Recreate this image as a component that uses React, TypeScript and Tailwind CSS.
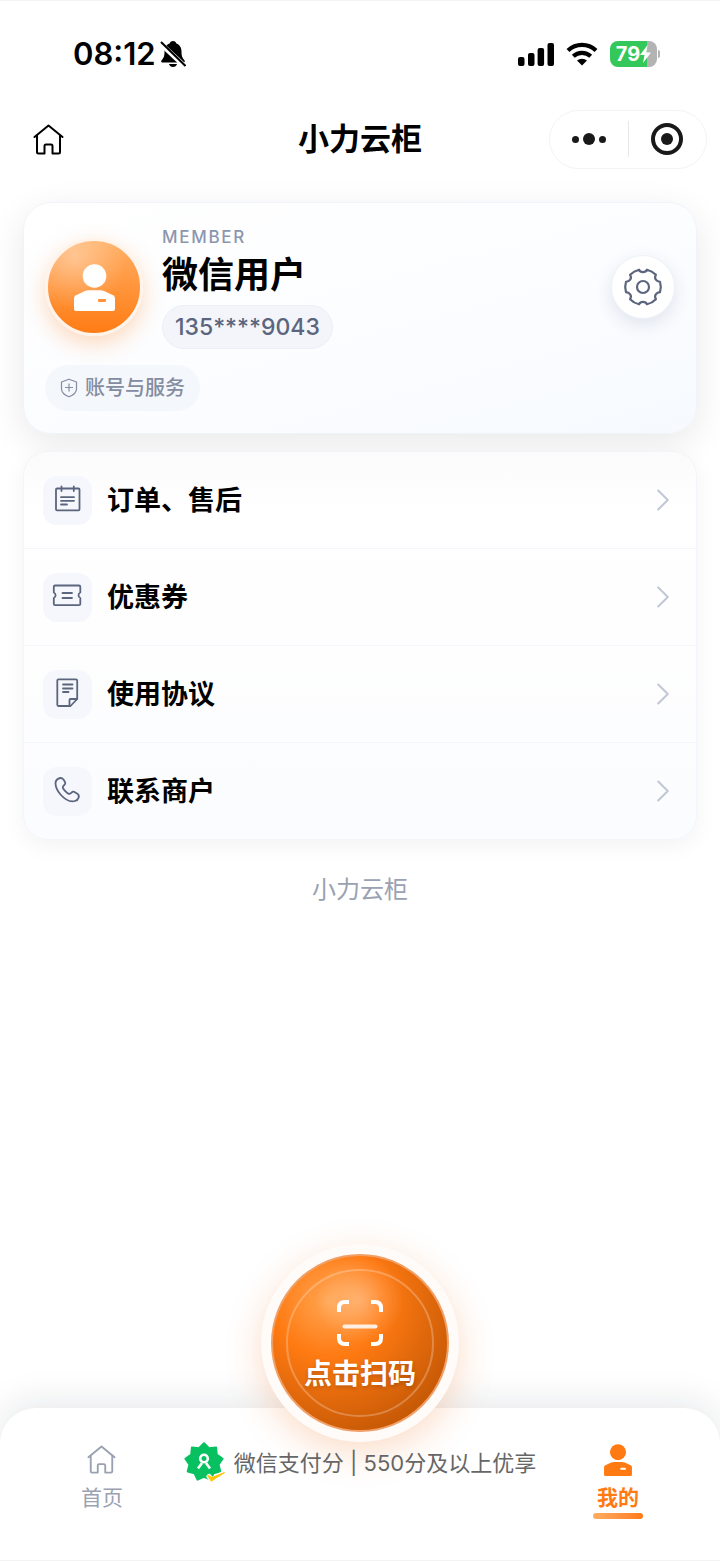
import React from 'react';

const HomeIcon: React.FC<{ className?: string }> = ({ className }) => (
  <svg viewBox="0 0 31 31" fill="none" stroke="currentColor" strokeWidth="2" strokeLinejoin="round" strokeLinecap="round" className={className}>
    <path d="M1.5 13 15.5 1.5 29.5 13" />
    <path d="M4 11.5V28q0 1.5 1.5 1.5h6V22q0-1.5 1.5-1.5h5q1.5 0 1.5 1.5v7.5h6q1.5 0 1.5-1.5V11.5" />
  </svg>
);

const UserIcon: React.FC<{ className?: string; slot: string }> = ({ className, slot }) => (
  <svg viewBox="0 0 41 47" fill="currentColor" className={className}>
    <circle cx="20.5" cy="12" r="11.8" />
    <path d="M2 31.2 10.5 27.2Q12.500 26.300 15 26.300H26Q28.500 26.300 30.500 27.200L39 31.200Q41 32.200 41 34V45Q41 47 39 47H2Q0 47 0 45V34Q0 32.200 2 31.200Z" />
    <rect x="24" y="35" width="8" height="3" rx="1" className={slot} />
  </svg>
);

const BellOffIcon = () => (
  <svg viewBox="0 0 26 28" className="h-7 w-[26px]">
    <path d="M13 1c1.800 0 3 1 3.400 2.400C20 4.800 21.500 8 21.500 11.500c0 5 1 6.500 3 9 .8 1.200 0 2-1 2H2.500c-1.200 0-1.800-1-1-2 2-2.500 3-4 3-9C4.500 8 6 4.800 9.600 3.400 10 2 11.200 1 13 1Z" />
    <path d="M9 24h8c-.5 2-2 3-4 3s-3.500-1-4-3Z" />
    <path d="M-.5 2.500 25 26.500" stroke="#fff" strokeWidth="5" />
    <path d="M1 2 25.500 26" stroke="#000" strokeWidth="2" />
  </svg>
);

const SignalIcon = () => (
  <svg viewBox="0 0 36 23" className="h-[23px] w-9">
    <rect x="0" y="14" width="6.500" height="9" rx="2" />
    <rect x="10" y="10" width="6.500" height="13" rx="2" />
    <rect x="19.600" y="5" width="6.500" height="18" rx="2" />
    <rect x="29.500" y="0" width="6.500" height="23" rx="2" />
  </svg>
);

const WifiIcon = () => (
  <svg viewBox="0 0 32 24" className="h-6 w-8" fill="none" stroke="#000" strokeWidth="4.200">
    <path d="M2 8.500a20.500 20.500 0 0 1 28 0" />
    <path d="M7.300 14.300a13 13 0 0 1 17.400 0" />
    <path d="M16 23.500 11 18.600a7.500 7.500 0 0 1 10 0Z" fill="#000" stroke="none" />
  </svg>
);

const GearIcon = () => (
  <svg viewBox="-20 -20 40 40" className="size-10" fill="none" stroke="currentColor" strokeWidth="2.200" strokeLinejoin="round">
    <path d="M-4-17.300Q-3-14.800 0-14.800T4-17.300Q9-16.200 12.900-12.200Q11.300-9.400 12.800-7.400T17-5.200Q18.600 0 17 5.200Q14.300 5.400 12.800 7.400T12.900 12.200Q9 16.200 4 17.300Q3 14.800 0 14.800T-4 17.300Q-9 16.200-12.900 12.200Q-11.300 9.400-12.800 7.400T-17 5.200Q-18.600 0-17-5.200Q-14.300-5.400-12.800-7.400T-12.900-12.200Q-9-16.200-4-17.300Z" />
    <circle r="6" />
  </svg>
);

const ShieldIcon = () => (
  <svg viewBox="0 0 18 20" className="h-5 w-[18px]" fill="none" stroke="currentColor" strokeWidth="1.200" strokeLinejoin="round">
    <path d="M9 1.200 16.500 4v7c0 3.500-3 6-7.500 7.800C4.500 17 1.500 14.500 1.500 11V4Z" />
    <path d="M9 5.500v8M5 9.500h8" />
  </svg>
);

const PayScoreIcon = () => (
  <svg viewBox="-20 -20 42 42" className="size-[42px]" strokeLinejoin="round" strokeLinecap="round">
    <path
      d="M0-18.800 5-13.800 12.100-14.400 12.800-7.400 18.600-3.300 14.500 2.600 16.300 9.500 9.500 11.300 6.500 17.700 0 14.800-6.500 17.700-9.500 11.300-16.300 9.500-14.500 2.600-18.600-3.300-12.800-7.400-12.100-14.400-5-13.800Z"
      fill="#07c160"
      stroke="#07c160"
      strokeWidth="2"
    />
    <g fill="none" stroke="#fff" strokeWidth="2.600">
      <circle cx="0" cy="-3.500" r="3.800" />
      <path d="M-2 1-6 6.500M2 1 6 6.500" strokeLinecap="butt" />
    </g>
    <path d="M5 14.500 8 18 19 11.500" fill="none" stroke="#fff" strokeWidth="5" />
    <path d="M4 13.500 8 15.500 20.500 10.500 7.500 19Z" fill="#ffc300" stroke="#ffc300" strokeWidth="1" />
  </svg>
);

const ScanIcon = () => (
  <svg viewBox="0 0 48 48" className="size-12" fill="none" stroke="#fff" strokeWidth="4">
    <path d="M3 13V9q0-6 6-6h4M35 3h4q6 0 6 6v4M45 35v4q0 6-6 6h-4M13 45H9q-6 0-6-6v-4" />
    <path d="M8.500 27.500h31" strokeLinecap="round" strokeOpacity=".85" />
  </svg>
);

const MENU_ITEMS = [
  {
    label: '订单、售后',
    icon: (
      <>
        <rect x="4" y="4.500" width="23.500" height="21.800" rx="1" />
        <path d="M9.500 2.500V7M21.800 2.500V7M9 13.200h13M9 16.800h13M9 20.500h6" />
      </>
    ),
  },
  {
    label: '优惠券',
    icon: (
      <>
        <path d="M3 4.500H27Q28.300 4.500 28.300 6v5.500a3 3 0 0 0 0 5.500V23Q28.300 24.200 27 24.200H3Q1.800 24.200 1.800 23V17a3 3 0 0 0 0-5.500V6Q1.800 4.500 3 4.500Z" />
        <path d="M10.500 12H20M10.500 17H20" />
      </>
    ),
  },
  {
    label: '使用协议',
    icon: (
      <>
        <path d="M6.500 1.300H24Q25.200 1.300 25.200 2.500V21L18.500 28H6.500Q5.300 28 5.300 26.800V2.500Q5.300 1.300 6.500 1.300Z" />
        <path d="M25 21H18.500Q17.500 21 17.500 22v6M11 6.500h9.500M11 10.500h9.500M11 14h5.500" />
      </>
    ),
  },
  {
    label: '联系商户',
    icon: (
      <path d="M3.500 8.200C3.500 4.500 8.500 1 11.500 4.500C12.500 6 13 7 13.300 8C13.700 10 10.500 10.500 10.800 12.500C11 14 14.500 18 16.800 18.800C19 19.500 19.500 16 22 16.800L25 18.500C28.500 20.500 26.500 25 23 26C18 27.500 12.500 24 8.500 19.500C5.500 16 3.500 12 3.500 8.200Z" />
    ),
  },
];

const StatusBar = () => (
  <div className="flex h-[106px] items-center justify-between pl-[73px] pr-[60px]">
    <div className="flex items-center gap-1">
      <span className="text-[31px] font-semibold leading-10">08:12</span>
      <BellOffIcon />
    </div>
    <div className="flex items-center">
      <SignalIcon />
      <div className="ml-3">
        <WifiIcon />
      </div>
      <div className="ml-3 flex h-[26px] w-[47px] items-center justify-center rounded-lg bg-[linear-gradient(90deg,#34c759_79%,#b3b3b3_79%)] text-[20px] font-bold text-white">
        79
        <svg viewBox="0 0 11 18" className="h-[18px] w-[11px]" fill="#fff">
          <path d="M7.500 0 0 10h4.500L3 18l8-10.500H6.500Z" />
        </svg>
      </div>
      <div className="ml-px h-2 w-0.5 rounded-r bg-[#b3b3b3]" />
    </div>
  </div>
);

const NavBar = () => (
  <header className="grid h-16 grid-cols-[1fr_auto_1fr] items-center pl-[33px] pr-[13px]">
    <button aria-label="首页" className="w-[31px]">
      <HomeIcon className="size-[31px]" />
    </button>
    <h1 className="pl-5 -ml-10 text-[31px] font-bold leading-10">小力云柜</h1>
    <div className="flex h-[59px] w-[158px] items-center justify-self-end rounded-full border border-[#f3f3f3] text-[#191919]">
      <button aria-label="更多" className="flex flex-1 items-center justify-center gap-1">
        <span className="size-[7px] rounded-full bg-current" />
        <span className="size-3 rounded-full bg-current" />
        <span className="size-[7px] rounded-full bg-current" />
      </button>
      <div className="h-9 w-px bg-[#e8e8e8]" />
      <button aria-label="关闭" className="flex flex-1 justify-center">
        <span className="flex size-8 items-center justify-center rounded-full border-4 border-current">
          <span className="size-3 rounded-full bg-current" />
        </span>
      </button>
    </div>
  </header>
);

const ProfileCard = () => (
  <section className="rounded-[28px] border border-[#f0f4fa] bg-[linear-gradient(165deg,#ffffff_0%,#fcfdff_50%,#f6faff_100%)] px-[21px] pt-[22px] pb-[22px] shadow-[0_10px_36px_rgba(0,0,0,0.09)]">
    <div className="flex items-center">
      <div className="flex size-[98px] items-center justify-center rounded-full border-3 border-[#fff3ea] bg-[radial-gradient(circle_at_30%_20%,rgba(255,255,255,0.35),transparent_50%),linear-gradient(180deg,#ffb066_0%,#ff7a12_100%)] bg-origin-border shadow-[0_8px_22px_rgba(255,122,18,0.28)]">
        <UserIcon className="h-[47px] w-[41px] text-white" slot="fill-[#ff933c]" />
      </div>
      <div className="ml-[19px] flex flex-col items-start">
        <span className="text-[17px] font-medium leading-6 tracking-widest text-[#8c96ad]">MEMBER</span>
        <h2 className="mt-1 text-[36px] font-bold leading-[44px] text-black">微信用户</h2>
        <span className="mt-2 flex h-11 items-center rounded-full border border-[#ebeff7] bg-[#f3f5fb] px-3 text-[23px] font-medium text-[#5b657d]">
          135****9043
        </span>
      </div>
      <button
        aria-label="设置"
        className="ml-auto flex size-16 items-center justify-center rounded-full border border-[#eef2f9] bg-white text-[#5b657d] shadow-[0_6px_18px_rgba(40,60,100,0.12)]"
      >
        <GearIcon />
      </button>
    </div>
    <button className="mt-4 flex h-[46px] items-center gap-[7px] rounded-full bg-[#f4f7fc] px-[15px] text-[20px] font-medium text-[#838ca0]">
      <ShieldIcon />
      账号与服务
    </button>
  </section>
);

const Menu = () => (
  <nav className="mt-[17px] overflow-hidden rounded-3xl border border-[#f3f5fa] bg-[linear-gradient(180deg,#fbfbfc_0%,#ffffff_15%,#fefefe_45%,#fbfcff_100%)] shadow-[0_6px_22px_rgba(0,0,0,0.05)]">
    <ul className="divide-y divide-[#f3f6fa]">
      {MENU_ITEMS.map(item => (
        <li key={item.label}>
          <a href="#" className="flex h-24 items-center pl-[19px] pr-[27px]">
            <span className="flex size-[49px] items-center justify-center rounded-[14px] bg-[#f6f7fc] text-[#5b657d]">
              <svg viewBox="0 0 32 32" className="size-8" fill="none" stroke="currentColor" strokeWidth="1.800" strokeLinecap="round" strokeLinejoin="round">
                {item.icon}
              </svg>
            </span>
            <span className="ml-[15px] pt-0.5 text-[27px] font-bold text-black">{item.label}</span>
            <svg viewBox="0 0 12 22" className="ml-auto h-[22px] w-3" fill="none" stroke="#c0c7d6" strokeWidth="2" strokeLinecap="round" strokeLinejoin="round">
              <path d="M1.200 1.500 10.800 11 1.200 20.500" />
            </svg>
          </a>
        </li>
      ))}
    </ul>
  </nav>
);

const ScanButton = () => (
  <button className="absolute -top-[164px] left-1/2 size-[198px] -translate-x-1/2 rounded-full bg-[#fffbf9] p-[10px] shadow-[0_10px_36px_rgba(240,110,20,0.24)]">
    <span className="flex size-full rounded-full border-2 border-[#f0a066] bg-[radial-gradient(circle_at_50%_25%,rgba(255,255,255,0.3),transparent_28%),radial-gradient(circle_at_32%_26%,#ffa552_0%,#ff7a12_32%,#c85a06_78%,#bd5203_100%)] p-[13px]">
      <span className="flex size-full flex-col items-center rounded-full border-2 border-white/25 pt-7">
        <ScanIcon />
        <span className="mt-[7px] text-[28px] font-bold leading-10 text-white [text-shadow:0_2px_4px_rgba(0,0,0,0.2)]">点击扫码</span>
      </span>
    </span>
  </button>
);

const TabBar = () => (
  <footer className="relative mt-auto grid h-[153px] grid-cols-[1fr_auto_1fr] items-start rounded-t-[36px] border-b border-[#f3f3f3] bg-white px-5 shadow-[0_-6px_36px_rgba(20,30,50,0.10)]">
    <ScanButton />
    <a href="#" className="flex flex-col items-center pt-[37px] text-[#9aa1b1]">
      <HomeIcon className="size-[29px]" />
      <span className="mt-[9px] text-[21px] leading-[30px]">首页</span>
    </a>
    <p className="relative flex items-center gap-2 pt-[34px] text-[22px] text-[#666]">
      <PayScoreIcon />
      <span>微信支付分 | 550分及以上优享</span>
    </p>
    <a href="#" aria-current="page" className="flex flex-col items-center pt-9 text-[#ff7a12]">
      <UserIcon className="h-8 w-7" slot="fill-white" />
      <span className="mt-[7px] text-[21px] font-bold leading-[30px]">我的</span>
      <span className="h-[6px] w-[50px] rounded-full bg-linear-to-r from-[#ffac62] to-[#ff7a12]" />
    </a>
  </footer>
);

const App: React.FC = () => (
  <div className="flex min-h-screen flex-col border-t border-[#f3f3f3] bg-white font-['Inter','Noto_Sans_CJK_SC',sans-serif] text-black">
    <StatusBar />
    <NavBar />
    <main className="px-[23px] pt-[31px]">
      <ProfileCard />
      <Menu />
      <p className="mt-8 text-center text-[24px] leading-9 text-[#9aa1b1]">小力云柜</p>
    </main>
    <TabBar />
  </div>
);

export default App;
